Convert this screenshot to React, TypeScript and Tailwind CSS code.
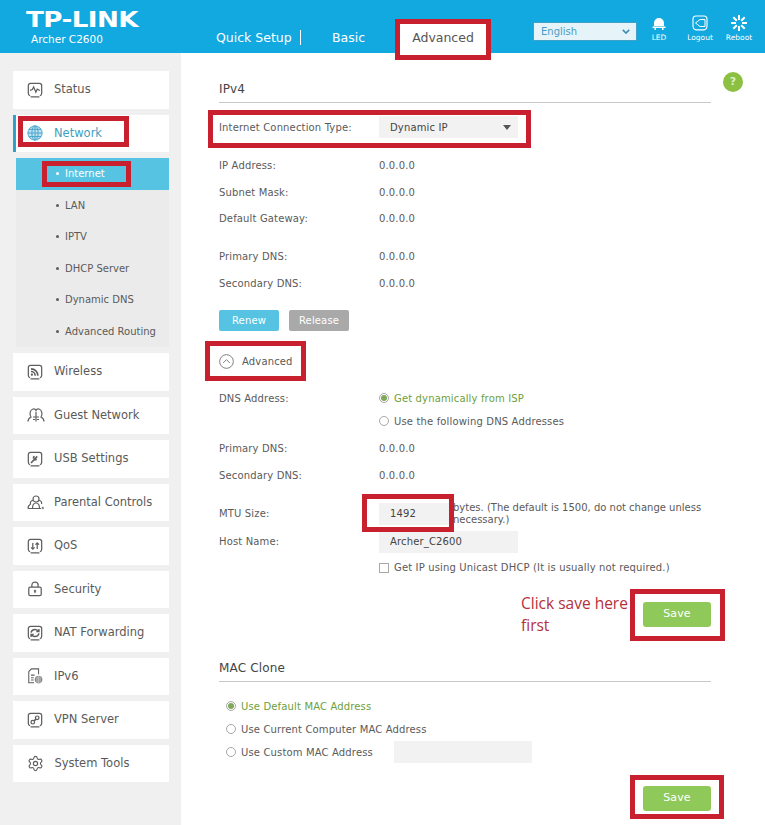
import { Settings } from "lucide-react";

const iconClass = "w-[16px] h-[16px] shrink-0";

function BoxIcon({ children }: { children: React.ReactNode }) {
  return (
    <svg viewBox="0 0 18 18" className={iconClass} fill="none" stroke="#5f5f5f" strokeWidth="1.400">
      <path d="M4 16.800h10M3.500 15.500C2 15 1.500 14 1.500 13V4C1.500 2.500 2.500 1.500 4 1.500h10c1.500 0 2.500 1 2.500 2.500v9c0 1-.5 2-2 2.500" />
      {children}
    </svg>
  );
}

const icons: Record<string, React.ReactNode> = {
  Status: (
    <BoxIcon>
      <path d="M3.500 9.500l2.500-1 1.500-3 2.500 6 1.500-3.500 3 1.500" />
    </BoxIcon>
  ),
  Network: (
    <svg viewBox="0 0 18 18" className={iconClass} fill="none" stroke="#4aa6cf" strokeWidth="1.100">
      <circle cx="9" cy="9" r="8" fill="#bfe0ee" />
      <ellipse cx="9" cy="9" rx="3.500" ry="8" />
      <path d="M9 1v16M1 9h16M2.300 5h13.400M2.300 13h13.400" />
    </svg>
  ),
  Wireless: (
    <BoxIcon>
      <circle cx="5.500" cy="12" r="1.300" fill="#5f5f5f" stroke="none" />
      <path d="M4.500 8.500c2.700 0 4.700 2 4.700 4.700M4.500 5.500c4.500 0 7.700 3.200 7.700 7.700" strokeWidth="1.800" />
    </BoxIcon>
  ),
  "Guest Network": (
    <svg viewBox="0 0 18 18" className="w-[18px] h-[18px] shrink-0" fill="none" stroke="#5f5f5f" strokeWidth="1.200">
      <path d="M1 15.500c0-2.500 1-3.500 3-4.500C2.500 9 2.500 4 6 3c1.500-.3 2.500.3 3 1.500C9.500 3.300 10.500 2.700 12 3c3.500 1 3.500 6 2 8 2 1 3 2 3 4.500" />
      <path d="M6 11h6M6 13.500h2M10 13.500h2M9 6v9.500" />
    </svg>
  ),
  "USB Settings": (
    <BoxIcon>
      <path d="M4.500 13.500l7-7.500M11 9.500l-3 .5M8 5.500l-1 3" strokeWidth="1.800" />
    </BoxIcon>
  ),
  "Parental Controls": (
    <svg viewBox="0 0 18 18" className="w-[18px] h-[18px] shrink-0" fill="none" stroke="#5f5f5f" strokeWidth="1.200">
      <circle cx="9" cy="6" r="3" />
      <path d="M5.500 15.500c0-3 1-5.500 3.500-5.500s3.500 2.500 3.500 5.500M1 15.500c0-2.500 1-3.500 2.500-4.500-.5-2 .5-3.500 2.500-3.500M12 7.500c2 0 3 1.500 2.500 3.500M1 15.500h13" />
      <circle cx="15.800" cy="15" r="1.200" fill="#8a8a8a" stroke="none" />
    </svg>
  ),
  QoS: (
    <BoxIcon>
      <path d="M6.500 5.500v7M4.500 10.500l2 2 2-2M11.500 12.500v-7M9.500 7.500l2-2 2 2" />
    </BoxIcon>
  ),
  Security: (
    <svg viewBox="0 0 18 18" className={iconClass} fill="none" stroke="#5f5f5f" strokeWidth="1.400">
      <path d="M5.500 7V4.500C5.500 2.500 7 1.200 9 1.200s3.500 1.300 3.500 3.300V7" />
      <rect x="2" y="7" width="14" height="9.500" rx="1.500" />
      <path d="M9 13.500V10.500M7.800 11.700L9 10.500l1.200 1.200" />
    </svg>
  ),
  "NAT Forwarding": (
    <BoxIcon>
      <path d="M4.500 8.500C5 6 7 5 9 5c1.500 0 2.500.5 3.500 1.500M13.500 9.500C13 12 11 13 9 13c-1.500 0-2.500-.5-3.500-1.500" strokeWidth="1.600" />
      <path d="M13.500 4.500v3h-3M4.500 13.500v-3h3" fill="#5f5f5f" />
    </BoxIcon>
  ),
  IPv6: (
    <svg viewBox="0 0 18 18" className={iconClass} fill="none" stroke="#5f5f5f" strokeWidth="1.200">
      <path d="M8 16.500H2V4l3-3h8v6" />
      <path d="M4.500 8h4M4.500 11h3M4.500 13.500h3" />
      <circle cx="13" cy="13" r="4.300" fill="#8a8a8a" stroke="none" />
      <path d="M13 9v8M11.300 9.500v7M14.700 9.500v7" stroke="#e0e0e0" strokeWidth="0.700" />
    </svg>
  ),
  "VPN Server": (
    <BoxIcon>
      <circle cx="6.500" cy="11.500" r="2" />
      <circle cx="11.500" cy="6.500" r="2" />
      <path d="M8 10l2-2" strokeWidth="1.800" />
    </BoxIcon>
  ),
  "System Tools": <Settings className="w-[17px] h-[17px] shrink-0 -ml-[0.5px]" color="#5f5f5f" strokeWidth={1.6} />,
};

function NavCard({ label, active = false }: { label: string; active?: boolean }) {
  return (
    <div
      className={`flex items-center h-[37.500px] bg-white gap-[11px] ${
        active ? "border-l-[3px] border-[#2fa3c7] pl-[11px] text-[#3f9fc0]" : "pl-[14px] text-[#5a5a5a]"
      } ${label === "Guest Network" || label === "Parental Controls" ? "[&>span]:-ml-[2px]" : ""}`}
    >
      {icons[label]}
      <span>{label}</span>
    </div>
  );
}

const subItems = ["Internet", "LAN", "IPTV", "DHCP Server", "Dynamic DNS", "Advanced Routing"];

function Sidebar() {
  const before = ["Status", "Network"];
  const after = [
    "Wireless",
    "Guest Network",
    "USB Settings",
    "Parental Controls",
    "QoS",
    "Security",
    "NAT Forwarding",
    "IPv6",
    "VPN Server",
    "System Tools",
  ];
  return (
    <aside className="w-[181px] shrink-0 bg-[#f0f0f0] pt-[18px] pl-[13px] pr-[12px] flex flex-col gap-[6px] text-[11.500px]">
      {before.map((l) => (
        <NavCard key={l} label={l} active={l === "Network"} />
      ))}
      <div className="ml-[3px] bg-[#ebebeb] text-[10px] text-[#5a5a5a]">
        {subItems.map((s, i) => (
          <div
            key={s}
            className={`flex items-center h-[31.500px] pl-[40px] ${i === 0 ? "bg-[#56c3e3] text-white" : ""}`}
          >
            <span className={`w-[3px] h-[3px] rounded-full mr-[6px] ${i === 0 ? "bg-white" : "bg-[#5a5a5a]"}`} />
            {s}
          </div>
        ))}
      </div>
      {after.map((l) => (
        <NavCard key={l} label={l} />
      ))}
    </aside>
  );
}

function Header() {
  return (
    <header className="h-[53px] bg-[#12a8e0] flex text-white">
      <div className="w-[216px] shrink-0 pl-[26px] pt-[8px]">
        <div className="text-[22px] leading-[24px] font-bold tracking-[-0.500px] origin-left scale-x-[1.190]">
          TP-LINK
        </div>
        <div className="pl-[5px] text-[10.500px] leading-[14px]">Archer C2600</div>
      </div>
      <nav className="w-[271px] shrink-0 flex items-end text-[12.500px]">
        <span className="mb-[8px] w-[85px] mr-[31px] border-r border-white leading-[15px]">Quick Setup</span>
        <span className="mb-[8px] w-[67px] leading-[15px]">Basic</span>
        <span className="h-[30px] w-[88px] bg-white text-[#555] flex items-center justify-center">Advanced</span>
      </nav>
      <div className="ml-[46px] mt-[22px] w-[104px] h-[19px] bg-[#e6f3f8] border border-[#3fa2c4] text-[#4a9cc4] text-[10px] flex items-center justify-between pl-[7px] pr-[6px]">
        <span>English</span>
        <svg viewBox="0 0 10 6" className="w-[8px] h-[5px]" fill="none" stroke="#3f8fb5" strokeWidth="2">
          <path d="M1 1l4 4 4-4" />
        </svg>
      </div>
      <div className="flex text-[7.500px] ml-[10px] mt-[15px]">
        <div className="w-[24px] flex flex-col items-center">
          <svg viewBox="0 0 16 16" className="w-[16px] h-[16px]" fill="white">
            <path d="M3 11V8a5 5 0 0110 0v3zM1.500 11.500h13V13h-13zM3.500 13h1.500v2H3.500zM11 13h1.500v2H11z" />
          </svg>
          <span className="leading-[10px] mt-[2px]">LED</span>
        </div>
        <div className="w-[40px] ml-[9px] flex flex-col items-center">
          <svg viewBox="0 0 16 16" className="w-[16px] h-[16px]" fill="none" stroke="white" strokeWidth="1.100">
            <path d="M3.500 14.800C1.500 14 1 13 1 11.500V4C1 2 2 1 4 1h8c2 0 3 1 3 3v7.500c0 1.500-.5 2.500-2.500 3.300zM3.500 15h9" />
            <path d="M8 4.500h5v7H8L3.500 8z" strokeWidth="1" />
          </svg>
          <span className="leading-[10px] mt-[2px]">Logout</span>
        </div>
        <div className="w-[36px] ml-[1px] flex flex-col items-center">
          <svg viewBox="0 0 16 16" className="w-[16px] h-[16px]" fill="none" stroke="white" strokeWidth="2">
            <path d="M8 0v5M8 11v5M0 8h5M11 8h5M2.300 2.300l3.500 3.500M10.200 10.200l3.500 3.500M13.700 2.300l-3.500 3.500M5.800 10.200l-3.500 3.500" />
          </svg>
          <span className="leading-[10px] mt-[2px]">Reboot</span>
        </div>
      </div>
    </header>
  );
}

function Row({ label, value }: { label: string; value?: string }) {
  return (
    <div className="flex items-center h-[26.500px]">
      <span className="w-[160px] shrink-0">{label}</span>
      {value && <span>{value}</span>}
    </div>
  );
}

function Radio({ label, on = false }: { label: string; on?: boolean }) {
  return (
    <span className={`flex items-center ${on ? "text-[#6d9f3d]" : ""}`}>
      <span className="w-[10px] h-[10px] mr-[5px] rounded-full border border-[#a8a8a8] flex items-center justify-center shrink-0">
        {on && <span className="w-[6px] h-[6px] rounded-full bg-[#7fa85a]" />}
      </span>
      {label}
    </span>
  );
}

function SaveButton() {
  return (
    <div className="w-[68px] h-[25px] rounded-[3px] bg-[#8fc95a] text-white text-[11px] flex items-center justify-center">
      Save
    </div>
  );
}

function Content() {
  return (
    <main className="flex-1 min-w-0 pt-[27px] pl-[38px] pr-[54px] text-[10px] tracking-[0.150px] text-[#5a5a5a]">
      <h2 className="h-[23px] border-b border-[#c8c8c8] text-[12px] text-[#444]">IPv4</h2>
      <div className="flex items-center mt-[13px] h-[22px]">
        <span className="w-[160px] shrink-0">Internet Connection Type:</span>
        <div className="w-[139px] h-[22px] bg-[#f2f2f2] text-[#444] flex items-center justify-between pl-[11px] pr-[7px]">
          <span>Dynamic IP</span>
          <span className="w-0 h-0 border-x-[4px] border-x-transparent border-t-[5px] border-t-[#555]" />
        </div>
      </div>
      <div className="mt-[14.500px]">
        <Row label="IP Address:" value="0.0.0.0" />
        <Row label="Subnet Mask:" value="0.0.0.0" />
        <Row label="Default Gateway:" value="0.0.0.0" />
      </div>
      <div className="mt-[11.300px]">
        <Row label="Primary DNS:" value="0.0.0.0" />
        <Row label="Secondary DNS:" value="0.0.0.0" />
      </div>
      <div className="flex gap-[10px] mt-[13.400px] text-white">
        <div className="w-[60px] h-[21px] rounded-[2px] bg-[#56c3e3] flex items-center justify-center">Renew</div>
        <div className="w-[60px] h-[21px] rounded-[2px] bg-[#a9a9a9] flex items-center justify-center">Release</div>
      </div>
      <div className="flex items-center h-[22px] mt-[20px]">
        <svg viewBox="0 0 16 16" className="w-[15px] h-[15px] mr-[8px]" fill="none" stroke="#777" strokeWidth="1">
          <circle cx="8" cy="8" r="7.300" />
          <path d="M4.500 9.500L8 6l3.500 3.500" />
        </svg>
        Advanced
      </div>
      <div className="flex items-center h-[23px] mt-[14px]">
        <span className="w-[160px] shrink-0">DNS Address:</span>
        <Radio label="Get dynamically from ISP" on />
      </div>
      <div className="flex items-center h-[23px] pl-[160px]">
        <Radio label="Use the following DNS Addresses" />
      </div>
      <div className="mt-[3px]">
        <Row label="Primary DNS:" value="0.0.0.0" />
        <Row label="Secondary DNS:" value="0.0.0.0" />
      </div>
      <div className="flex items-center h-[24px] mt-[13px]">
        <span className="w-[160px] shrink-0">MTU Size:</span>
        <div className="w-[70px] h-[22px] bg-[#f2f2f2] text-[#444] pl-[11px] flex items-center shrink-0">1492</div>
        <span className="ml-[4px] leading-[12px] whitespace-nowrap tracking-normal">
          bytes. (The default is 1500, do not change unless
          <br />
          necessary.)
        </span>
      </div>
      <div className="flex items-center h-[22px] mt-[5px]">
        <span className="w-[160px] shrink-0">Host Name:</span>
        <div className="w-[139px] h-[22px] bg-[#f2f2f2] text-[#444] pl-[11px] flex items-center">Archer_C2600</div>
      </div>
      <div className="flex items-center h-[20px] mt-[5px] pl-[160px]">
        <span className="w-[10px] h-[10px] mr-[5px] border border-[#a8a8a8] shrink-0" />
        Get IP using Unicast DHCP (It is usually not required.)
      </div>
      <div className="flex justify-end mt-[24px]">
        <SaveButton />
      </div>
      <h2 className="h-[23px] mt-[32px] border-b border-[#c8c8c8] text-[12px] text-[#444]">MAC Clone</h2>
      <div className="pl-[7px] mt-[13px]">
        <div className="flex items-center h-[23px]">
          <Radio label="Use Default MAC Address" on />
        </div>
        <div className="flex items-center h-[23px]">
          <Radio label="Use Current Computer MAC Address" />
        </div>
        <div className="flex items-center h-[23px]">
          <span className="w-[168px] shrink-0">
            <Radio label="Use Custom MAC Address" />
          </span>
          <div className="w-[138px] h-[22px] bg-[#f2f2f2]" />
        </div>
      </div>
      <div className="flex justify-end mt-[22px]">
        <SaveButton />
      </div>
    </main>
  );
}

// red marks drawn over the screenshot
function Mark({ className }: { className: string }) {
  return <div className={`absolute border-[5px] border-[#c9202f] pointer-events-none ${className}`} />;
}

export default function App() {
  return (
    <div className="relative w-[765px] h-[825px] overflow-hidden bg-white [font-family:'DejaVu_Sans',Verdana,sans-serif]">
      <Header />
      <div className="flex h-[772px]">
        <Sidebar />
        <Content />
      </div>
      <span className="absolute left-[723px] top-[72px] w-[20px] h-[20px] rounded-full bg-[#8cc043] flex items-center justify-center text-[#dcefc4] text-[11px] font-bold">
        ?
      </span>
      <Mark className="left-[395px] top-[19px] w-[96px] h-[41px]" />
      <Mark className="left-[18px] top-[116px] w-[111px] h-[31px]" />
      <Mark className="left-[42px] top-[161px] w-[89px] h-[26px] border-[4px]" />
      <Mark className="left-[208px] top-[110px] w-[323px] h-[38px]" />
      <Mark className="left-[205px] top-[341px] w-[101px] h-[40px]" />
      <Mark className="left-[362px] top-[494px] w-[92px] h-[38px]" />
      <Mark className="left-[630px] top-[589px] w-[95px] h-[52px]" />
      <Mark className="left-[630px] top-[775px] w-[94px] h-[44px]" />
      <div className="absolute left-[521px] top-[592px] text-[15.500px] leading-[22px] text-[#b5303a] whitespace-nowrap [font-family:'Open_Sans',sans-serif]">
        Click save here
        <br />
        first
      </div>
    </div>
  );
}
